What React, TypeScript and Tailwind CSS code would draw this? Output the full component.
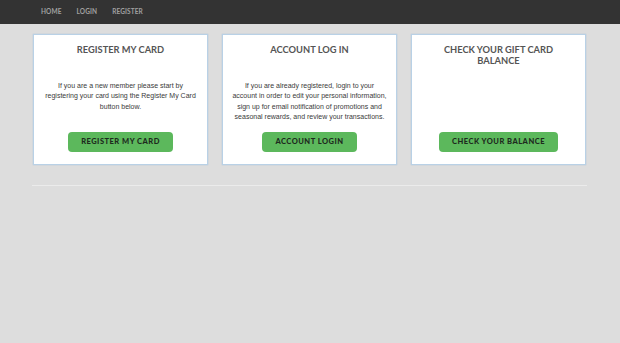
import React from "react";

const cards = [
  {
    title: "REGISTER MY CARD",
    lines: [
      "If you are a new member please start by",
      "registering your card using the Register My Card",
      "button below.",
    ],
    button: "REGISTER MY CARD",
  },
  {
    title: "ACCOUNT LOG IN",
    lines: [
      "If you are already registered, login to your",
      "account in order to edit your personal information,",
      "sign up for email notification of promotions and",
      "seasonal rewards, and review your transactions.",
    ],
    button: "ACCOUNT LOGIN",
  },
  {
    title: "CHECK YOUR GIFT CARD BALANCE",
    lines: [],
    button: "CHECK YOUR BALANCE",
  },
];

const App = () => {
  return (
    <div className="w-[620px] h-[343px] bg-[#dddddd] font-['Liberation_Sans',Arial,sans-serif]">
      <nav className="h-[24px] bg-[#333333] flex items-center pl-[41px] gap-[15px]">
        {["HOME", "LOGIN", "REGISTER"].map((item) => (
          <a
            key={item}
            className="text-[#a0a0a0] text-[6.5px] font-bold tracking-[0.1px] font-['Lato',sans-serif]"
          >
            {item}
          </a>
        ))}
      </nav>
      <div className="w-[555px] ml-[32px] pt-[10px]">
        <div className="flex gap-[14px] pl-[1px]">
          {cards.map((card) => (
            <div
              key={card.title}
              className="w-[175px] h-[131px] bg-white border border-[#b9d1e6] shadow-[0_0_1px_#9fbfdc] flex flex-col items-center px-[6px] pt-[9px] pb-[12px]"
            >
              <h3 className="h-[22px] text-[#555555] text-[9.3px] font-bold leading-[11px] text-center font-['Lato',sans-serif] w-[130px]">
                {card.title}
              </h3>
              <div className="mt-[15px] flex flex-col items-center text-[#3a3a3a] text-[7px] leading-[10.3px] whitespace-nowrap">
                {card.lines.map((line) => (
                  <span key={line}>{line}</span>
                ))}
              </div>
              <button className="mt-auto h-[20px] px-[13px] rounded-[4px] bg-[#5cb85c] text-[#1e2a1e] text-[7.5px] font-black tracking-[0.5px] font-['Lato',sans-serif]">
                {card.button}
              </button>
            </div>
          ))}
        </div>
        <div className="mt-[20px] h-[1px] bg-[#ebebeb]"></div>
      </div>
    </div>
  );
};

export default App;
